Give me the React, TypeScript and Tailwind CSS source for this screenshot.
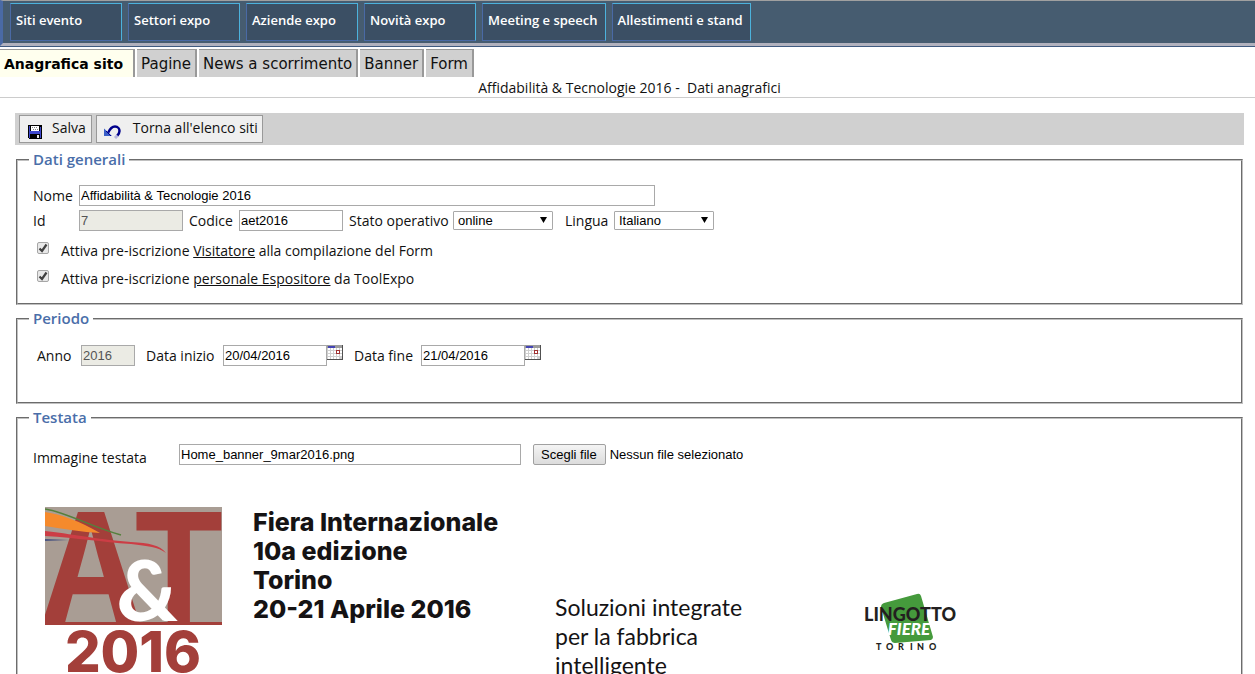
import React, { useRef, useState } from "react";

const sections = [
  "Siti evento",
  "Settori expo",
  "Aziende expo",
  "Novità expo",
  "Meeting e speech",
  "Allestimenti e stand",
];

const tabs = ["Anagrafica sito", "Pagine", "News a scorrimento", "Banner", "Form"];

const field =
  "h-[21px] border border-[#a9a9a9] bg-white px-px font-['Liberation_Sans',sans-serif] text-[13px] text-black outline-none disabled:bg-[#ebebe4] disabled:text-[#545454]";

function SaveIcon() {
  return (
    <svg width="14" height="14" viewBox="0 0 14 14" shapeRendering="crispEdges" aria-hidden="true">
      <path d="M0 0h14v14H1l-1-1z" fill="#000" />
      <path d="M1 1h1v12H1zM12 2h1v11h-1z" fill="#3f48cc" />
      <path d="M1 6h12v3H1z" fill="#3f48cc" />
      <path d="M3 1h8v5H3z" fill="#fff" />
      <path d="M4 2h1v1H4zM6 2h1v1H6zM8 2h1v1H8zM5 4h1v1H5zM7 4h1v1H7zM9 4h1v1H9z" fill="#888" />
      <path d="M9 10h2v3H9z" fill="#e8e8e8" />
    </svg>
  );
}

function BackIcon() {
  return (
    <svg width="17" height="14" viewBox="0 0 17 14" aria-hidden="true">
      <path d="M4 8C6 3.500 8 1.500 11 1.500c3 0 4.500 2.500 4.500 4.500 0 2-1 3.500-2.500 5" fill="none" stroke="#00008b" strokeWidth="2.500" />
      <path d="M13.500 10.500L11 13" stroke="#b4b4dc" strokeWidth="3" />
      <path d="M0 3.500L8 11H0z" fill="#3a5fc8" />
      <path d="M2 6l5 5" stroke="#00008b" strokeWidth="1" />
    </svg>
  );
}

function CalendarIcon() {
  return (
    <svg width="16" height="15" viewBox="0 0 16 15" shapeRendering="crispEdges" aria-hidden="true">
      <path d="M0 0h16v15H0z" fill="#cfcfcf" />
      <path d="M0 0h16v3H0z" fill="#9c9c9c" />
      <path d="M1 1h7v2H1z" fill="#4444b4" />
      <path
        d="M1 3h2v2H1zM4 3h2v2H4zM7 3h2v2H7zM10 3h2v2h-2zM13 3h2v2h-2zM1 6h2v2H1zM4 6h2v2H4zM7 6h2v2H7zM13 6h2v2h-2zM1 9h2v2H1zM4 9h2v2H4zM7 9h2v2H7zM10 9h2v2h-2zM13 9h2v2h-2zM1 12h2v2H1zM4 12h2v2H4zM7 12h2v2H7zM10 12h2v2h-2z"
        fill="#fff"
      />
      <path d="M9 5h4v4H9z" fill="#a03030" />
      <path d="M10 6h2v2h-2z" fill="#fff" />
      <path d="M15 0h1v15h-1zM0 14h16v1H0z" fill="#505050" />
    </svg>
  );
}

function FairLogo() {
  return (
    <svg className="shrink-0" width="177" height="180" viewBox="0 0 177 180" role="img" aria-label="A&T 2016">
      <rect width="177" height="117" fill="#a99d94" />
      <g fontFamily="'Noto Sans CJK JP', 'Liberation Sans', sans-serif" fontWeight="700">
        <text x="46" y="116" fontSize="150" textAnchor="middle" fill="#a33f3a">A</text>
        <text x="134" y="116" fontSize="150" textAnchor="middle" fill="#a33f3a">T</text>
      </g>
      <text x="102" y="114" fontSize="84" textAnchor="middle" fill="#fff" fontFamily="Lato, sans-serif" fontWeight="900">&amp;</text>
      <path d="M0 5c18 3 34 9 55 21-18-1-36-4-55-7z" fill="#f58a2c" />
      <path d="M0 2c24 4 46 18 76 26" fill="none" stroke="#55803c" strokeWidth="1.500" />
      <path d="M0 24c35 4 56 9 86 11 18 1 29 3 35 11-8-6-18-7-35-9-30-2-53-6-86-8z" fill="#cc3d45" />
      <path d="M0 32l24 1-24 1z" fill="#4a5480" />
      <path d="M0 115h177v3H0z" fill="#a33f3a" />
      <text x="88" y="165" fontSize="56" textAnchor="middle" fill="#a33f3a" fontFamily="Inter, sans-serif" fontWeight="800">2016</text>
    </svg>
  );
}

function VenueLogo() {
  return (
    <svg className="shrink-0" width="92" height="60" viewBox="0 0 92 60" role="img" aria-label="Lingotto Fiere Torino">
      <path d="M20 10L53 1q3-1 4 2l12 41q0 2-2 3L31 50q-3 0-4-3L17 14q0-3 3-4z" fill="#459a3c" />
      <g fontFamily="Lato, sans-serif" fontWeight="900" textAnchor="middle">
        <text x="46" y="28" fontSize="18" fill="#231f20">LINGOTTO</text>
        <text x="45" y="42" fontSize="17" fontStyle="italic" fill="#fff">FIERE</text>
      </g>
      <g fontFamily="Lato, sans-serif" fontWeight="900" fontSize="9" fill="#231f20">
        <text y="57" x="12 22 34 46 53 65">TORINO</text>
      </g>
    </svg>
  );
}

function Group({ title, className, children }: { title: string; className: string; children: React.ReactNode }) {
  return (
    <fieldset className={`min-w-0 border-2 border-[#c0c0c0] [border-style:groove] px-[11px] ${className}`}>
      <legend className="px-1 pb-0.5 text-[15px] leading-5 font-semibold text-[#4a6ea9]">{title}</legend>
      {children}
    </fieldset>
  );
}

function Choice({ id, width, value }: { id: string; width: string; value: string }) {
  return (
    <span className={`relative inline-flex ${width}`}>
      <select
        id={id}
        defaultValue={value}
        className="h-[19px] w-full appearance-none rounded-[1px] border border-[#a9a9a9] bg-white pl-1 font-['Liberation_Sans',sans-serif] text-[13px] leading-4 text-black"
      >
        <option>{value}</option>
      </select>
      <svg className="pointer-events-none absolute top-1.5 right-1.5" width="7" height="6" viewBox="0 0 7 6" aria-hidden="true">
        <path d="M0 0h7L3.500 6z" fill="#000" />
      </svg>
    </span>
  );
}

function Tick({ id, children }: { id: string; children: React.ReactNode }) {
  const [on, setOn] = useState(true);
  return (
    <div className="flex h-7 items-center gap-3 pl-1">
      <span className="relative mb-1.5 flex size-3">
        <input
          id={id}
          type="checkbox"
          checked={on}
          onChange={() => setOn(!on)}
          className="size-3 appearance-none rounded-[2px] border border-[#a6a6a6] bg-[#e8e8e8]"
        />
        {on && (
          <svg className="pointer-events-none absolute inset-0" width="12" height="12" viewBox="0 0 12 12" aria-hidden="true">
            <path d="M2.500 6.500L5 9l4.500-6.500" fill="none" stroke="#404040" strokeWidth="2.200" />
          </svg>
        )}
      </span>
      <label htmlFor={id}>{children}</label>
    </div>
  );
}

export default function App() {
  const picker = useRef<HTMLInputElement>(null);
  return (
    <div className="h-screen overflow-y-auto bg-white font-['Open_Sans','Noto_Sans',sans-serif] text-[14px] leading-5 text-[#111] [scrollbar-width:none]">
      <nav className="border-b border-[#3f5a80]">
        <div className="flex gap-1.5 border-t border-b-[3px] border-l-[3px] border-t-[#a0a0a0] border-b-[#b1b1bd] border-l-[#4a6aa5] bg-[#465c70] pt-0.5 pb-0.5 pl-[7px]">
          {sections.map((name) => (
            <a
              key={name}
              href="#"
              className="h-[38px] min-w-28 border border-t-[#4cb2dc] border-r-[#4cb2dc] border-b-[#4a6aa5] border-l-[#4a6aa5] bg-[#3b4f64] pt-1.5 pr-[7px] pl-[5px] text-[13px] leading-5 font-semibold whitespace-nowrap text-white"
            >
              {name}
            </a>
          ))}
        </div>
      </nav>
      <div className="mt-0.5 flex gap-0.5 font-['DejaVu_Sans',sans-serif]">
        {tabs.map((name, i) => (
          <a
            key={name}
            href="#"
            className={
              i === 0
                ? "h-7 border-t border-r-2 border-[#999] bg-[#ffffee] pt-1 pr-2.5 pl-1 text-[14px] leading-5 font-bold text-black"
                : "h-7 border-t border-r-2 border-[#999] bg-[#d0d0d0] px-1 pt-1 text-[15px] leading-5"
            }
          >
            {name}
          </a>
        ))}
      </div>
      <header className="border-b border-[#ccc] pt-px text-center">
        <h1 className="pl-1 leading-[19px]">Affidabilità &amp; Tecnologie 2016 -&nbsp; Dati anagrafici</h1>
      </header>
      <main className="mr-[11px] ml-[15px] pt-[15px]">
        <div className="flex h-8 gap-1 bg-[#d0d0d0] px-1 pt-0.5">
          <button type="button" className="flex h-7 gap-2.5 border border-[#999] bg-[#efefef] pt-0.5 pr-[5px] pl-2">
            <span className="pt-[7px]"><SaveIcon /></span>
            <span>Salva</span>
          </button>
          <button type="button" className="flex h-7 gap-3 border border-[#999] bg-[#efefef] pt-0.5 pr-1 pl-[7px]">
            <span className="pt-[7px]"><BackIcon /></span>
            <span>Torna all'elenco siti</span>
          </button>
        </div>
        <div className="mr-px ml-px pt-1">
          <Group title="Dati generali" className="pb-[10px]">
            <div className="pt-[14px] pl-1">
              <div className="flex items-center">
                <label htmlFor="nome" className="w-[46px]">Nome</label>
                <input id="nome" className={`${field} w-[576px]`} defaultValue="Affidabilità & Tecnologie 2016" />
              </div>
              <div className="flex items-center pt-1">
                <label htmlFor="sito-id" className="w-[46px]">Id</label>
                <input id="sito-id" disabled className={`${field} w-[104px]`} defaultValue="7" />
                <label htmlFor="codice" className="w-14 pl-1.5">Codice</label>
                <input id="codice" className={`${field} w-[104px]`} defaultValue="aet2016" />
                <label htmlFor="stato" className="w-[110px] pl-1.5 whitespace-nowrap">Stato operativo</label>
                <Choice id="stato" width="w-[100px]" value="online" />
                <label htmlFor="lingua" className="w-[61px] pl-3">Lingua</label>
                <Choice id="lingua" width="w-[100px]" value="Italiano" />
              </div>
            </div>
            <div className="pt-1.5 pl-1">
              <Tick id="pre-visitatore">
                Attiva pre-iscrizione <u>Visitatore</u> alla compilazione del Form
              </Tick>
              <Tick id="pre-espositore">
                Attiva pre-iscrizione <u>personale Espositore</u> da ToolExpo
              </Tick>
            </div>
          </Group>
          <Group title="Periodo" className="mt-[3px] pb-9">
            <div className="flex items-center pt-[15px] pl-2">
              <label htmlFor="anno" className="w-11">Anno</label>
              <input id="anno" disabled className={`${field} w-[54px]`} defaultValue="2016" />
              <label htmlFor="inizio" className="w-[88px] pl-[11px]">Data inizio</label>
              <input id="inizio" className={`${field} w-[104px]`} defaultValue="20/04/2016" />
              <button type="button" aria-label="Scegli data inizio" className="self-start"><CalendarIcon /></button>
              <label htmlFor="fine" className="w-[78px] pl-[11px]">Data fine</label>
              <input id="fine" className={`${field} w-[104px]`} defaultValue="21/04/2016" />
              <button type="button" aria-label="Scegli data fine" className="self-start"><CalendarIcon /></button>
            </div>
          </Group>
          <Group title="Testata" className="mt-[3px] pb-6">
            <div className="flex items-start pt-[15px] pl-1">
              <label htmlFor="immagine" className="w-[146px] pt-1">Immagine testata</label>
              <input id="immagine" className={`${field} w-[342px]`} defaultValue="Home_banner_9mar2016.png" />
              <div className="flex items-center gap-1 pl-3 font-['Liberation_Sans',sans-serif] text-[13px] leading-[21px] text-black">
                <input ref={picker} type="file" aria-label="File immagine" className="hidden" />
                <button
                  type="button"
                  onClick={() => picker.current?.click()}
                  className="h-[21px] rounded-[2px] border border-[#a0a0a0] bg-linear-to-b from-[#f4f4f4] to-[#dcdcdc] pr-2 pl-[7px] leading-[19px]"
                >
                  Scegli file
                </button>
                <span>Nessun file selezionato</span>
              </div>
            </div>
            <div className="flex pt-[39px] pl-4 font-['Lato',sans-serif] text-[#151314]">
              <FairLogo />
              <p className="w-[333px] pt-px pl-[31px] font-['Inter',sans-serif] text-[25px] leading-[29px] font-extrabold whitespace-nowrap">
                Fiera Internazionale
                <br />
                10a edizione
                <br />
                Torino
                <br />
                20-21 Aprile 2016
              </p>
              <p className="w-[309px] pt-[86px] text-[23px] leading-[29px]">
                Soluzioni integrate
                <br />
                per la fabbrica
                <br />
                intelligente
              </p>
              <div className="pt-[86px]"><VenueLogo /></div>
            </div>
          </Group>
        </div>
      </main>
    </div>
  );
}
